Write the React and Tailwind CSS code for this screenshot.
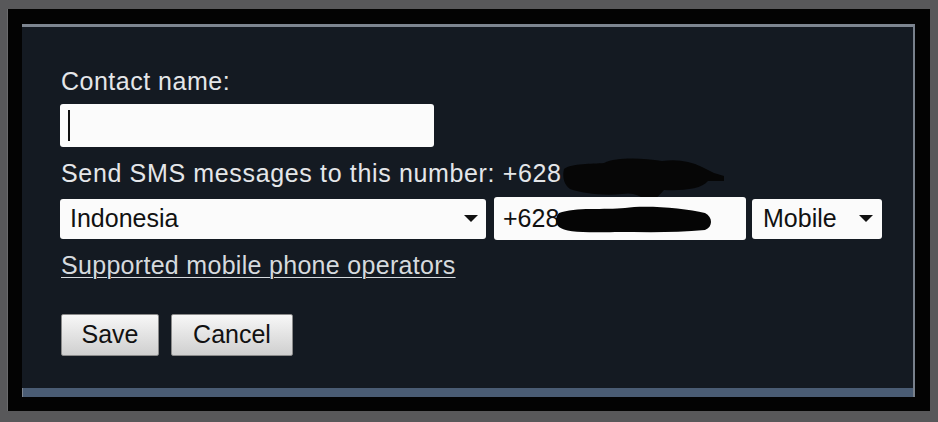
export default function App() {
  return (
    <div className="w-[938px] h-[422px] overflow-hidden bg-[#58585a] pt-[9px] pl-[7px] pr-[8px] pb-[11px] flex font-['Liberation_Sans',Arial,sans-serif]">
      <div className="flex-1 flex bg-[#030303] pt-[15px] pl-[14px] pr-[15px] pb-[14px] border-l border-l-[#6a6a6c]">
        <div className="flex-1 flex flex-col bg-[#141a22] border-t-[3px] border-t-[#7d8590] border-r-2 border-r-[#78808b]">
          <div className="flex-1 pl-[38px] pt-[39px] text-[#e4e6e9]">
            <div className="text-[25px] leading-[30px] tracking-[0.5px] ml-[1px]">Contact name:</div>
            <div className="mt-[8px] w-[374px] h-[43px] bg-[#fbfbfb] rounded-[3px] flex items-center pl-[8px]">
              <div className="w-[2px] h-[31px] bg-[#111]" />
            </div>
            <div className="mt-[11px] ml-[1px] text-[25px] leading-[30px] tracking-[0.65px] whitespace-nowrap">
              Send SMS messages to this number: +628
              <span className="relative inline-block w-0 h-0">
                <svg className="absolute left-0 top-[-27px]" width="170" height="52" viewBox="0 0 170 52">
                  <path
                    d="M2,14 C10,8 30,9 42,8 C55,2 80,3 100,6 C115,4 128,6 140,12 L152,18 L162,21 L162,26 L146,26 C140,34 120,36 102,35 C96,42 90,48 84,46 C78,40 70,37 60,39 C40,41 20,38 8,34 C2,30 0,22 2,14 Z"
                    fill="#060606"
                  />
                </svg>
              </span>
            </div>
            <div className="mt-[9px] flex items-center">
              <div className="w-[426px] h-[40px] bg-[#fbfbfb] rounded-[3px] flex items-center justify-between pl-[10px] pr-[8px] text-[25px] text-[#111]">
                <span>Indonesia</span>
                <svg width="14" height="8" viewBox="0 0 14 8"><path d="M0,0 L14,0 L7,7 Z" fill="#111" /></svg>
              </div>
              <div className="ml-[8px] w-[252px] h-[43px] bg-[#fbfbfb] rounded-[3px] flex items-center pl-[9px] text-[25px] text-[#111] relative">
                <span>+628</span>
                <span className="relative inline-block w-0 h-0">
                  <svg className="absolute left-[-4px] top-[-14px]" width="160" height="30" viewBox="0 0 160 30">
                    <path
                      d="M4,8 C20,2 50,5 70,3 C90,0 130,3 150,8 C158,12 158,22 150,25 C120,28 90,27 60,27 C30,28 10,27 4,22 C0,18 0,12 4,8 Z"
                      fill="#050505"
                    />
                  </svg>
                </span>
              </div>
              <div className="ml-[6px] w-[130px] h-[40px] bg-[#fbfbfb] rounded-[3px] flex items-center justify-between pl-[11px] pr-[9px] text-[25px] text-[#111]">
                <span>Mobile</span>
                <svg width="14" height="8" viewBox="0 0 14 8"><path d="M0,0 L14,0 L7,7 Z" fill="#111" /></svg>
              </div>
            </div>
            <div className="mt-[10px] ml-[1px] text-[25px] leading-[30px] tracking-[0.3px] text-[#d6dade] underline underline-offset-[3px] decoration-1 whitespace-nowrap">
              Supported mobile phone operators
            </div>
            <div className="mt-[34px] flex gap-[12px] ml-[1px]">
              <button className="w-[98px] h-[42px] rounded-[2px] border border-[#8a8a8a] bg-gradient-to-b from-[#f7f7f7] to-[#cfcfcf] text-[25px] text-[#111] flex items-center justify-center">
                Save
              </button>
              <button className="w-[122px] h-[42px] rounded-[2px] border border-[#8a8a8a] bg-gradient-to-b from-[#f7f7f7] to-[#cfcfcf] text-[25px] text-[#111] flex items-center justify-center">
                Cancel
              </button>
            </div>
          </div>
          <div className="h-[9px] bg-[#4a5c74] border-l border-l-[#7d8590]" />
        </div>
      </div>
    </div>
  );
}
